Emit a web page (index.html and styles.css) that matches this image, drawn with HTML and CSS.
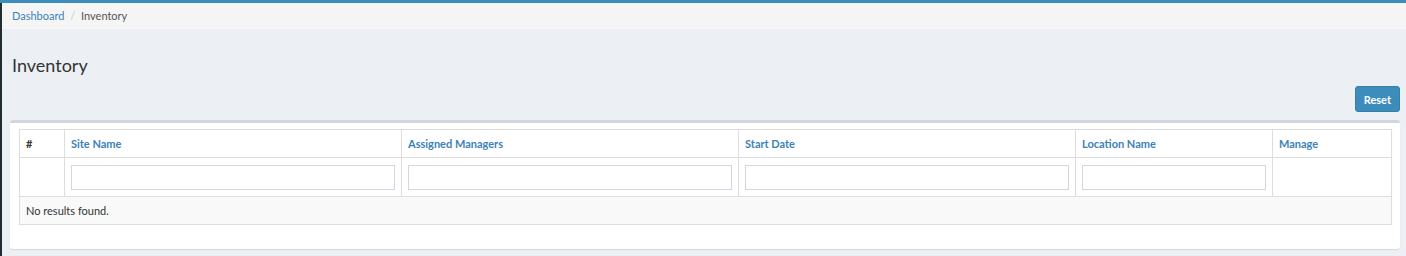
FILE: index.html
```html
<!DOCTYPE html>
<html lang="en">
<head>
    <meta charset="UTF-8">
    <title>Inventory</title>
    <link rel="stylesheet" href="styles.css">
</head>
<body>
    <div class="topbar"></div>
    <div class="page">
        <div class="breadcrumb">
            <a href="#">Dashboard</a>
            <span class="sep">/</span>
            <span class="current">Inventory</span>
        </div>

        <div class="content">
            <h1>Inventory</h1>

            <div class="toolbar">
                <button class="btn-reset">Reset</button>
            </div>

            <div class="box">
                <table class="grid">
                    <colgroup>
                        <col style="width: 45px">
                        <col style="width: 337px">
                        <col style="width: 337px">
                        <col style="width: 337px">
                        <col style="width: 197px">
                        <col style="width: 119px">
                    </colgroup>
                    <thead>
                        <tr class="head-row">
                            <th>#</th>
                            <th><a href="#">Site Name</a></th>
                            <th><a href="#">Assigned Managers</a></th>
                            <th><a href="#">Start Date</a></th>
                            <th><a href="#">Location Name</a></th>
                            <th><a href="#">Manage</a></th>
                        </tr>
                        <tr class="filter-row">
                            <td></td>
                            <td><input type="text"></td>
                            <td><input type="text"></td>
                            <td><input type="text"></td>
                            <td><input type="text"></td>
                            <td></td>
                        </tr>
                    </thead>
                    <tbody>
                        <tr class="empty-row">
                            <td colspan="6">No results found.</td>
                        </tr>
                    </tbody>
                </table>
            </div>
        </div>
    </div>
</body>
</html>
```

FILE: styles.css
```css
body {
    margin: 0;
    font-family: Lato, 'Open Sans', sans-serif;
    font-size: 11px;
    color: #333;
    background-color: #ecf0f5;
}

a {
    color: #3c82b8;
    text-decoration: none;
}

.topbar {
    height: 3px;
    background-color: #3c8dbc;
}

.page {
    border-left: 2px solid #222d32;
    min-height: 253px;
    background-color: #ecf0f5;
}

.breadcrumb {
    height: 26px;
    line-height: 26px;
    padding-left: 10px;
    background-color: #f5f5f5;
}

.breadcrumb .sep {
    color: #ccc;
    padding: 0 3px;
}

.breadcrumb .current {
    color: #555;
}

.content {
    padding: 0 6px 0 8px;
}

h1 {
    margin: 0;
    padding-top: 25px;
    font-size: 18px;
    font-weight: 400;
    line-height: 22px;
    padding-left: 2px;
}

.toolbar {
    display: flex;
    justify-content: flex-end;
    margin-top: 10px;
}

.btn-reset {
    height: 26px;
    padding: 0 8px;
    background-color: #3c8dbc;
    border: 1px solid #367fa9;
    border-radius: 3px;
    color: #fff;
    font-family: Lato, 'Open Sans', sans-serif;
    font-size: 11px;
    font-weight: 700;
}

.box {
    margin-top: 8px;
    background-color: #fff;
    border-top: 3px solid #d2d6de;
    border-radius: 3px;
    box-shadow: 0 1px 1px rgba(0, 0, 0, 0.1);
    padding: 6px 9px 24px 9px;
}

.grid {
    width: 100%;
    table-layout: fixed;
    border-collapse: collapse;
}

.grid th,
.grid td {
    border: 1px solid #ddd;
    padding: 0 6px;
    text-align: left;
}

.head-row th {
    height: 27px;
    font-weight: 700;
}

.filter-row td {
    height: 38px;
}

.filter-row input {
    display: block;
    box-sizing: border-box;
    width: 100%;
    height: 25px;
    margin: 0;
    border: 1px solid #d2d6de;
    background-color: #fff;
}

.empty-row td {
    height: 27px;
    background-color: #f9f9f9;
}
```
